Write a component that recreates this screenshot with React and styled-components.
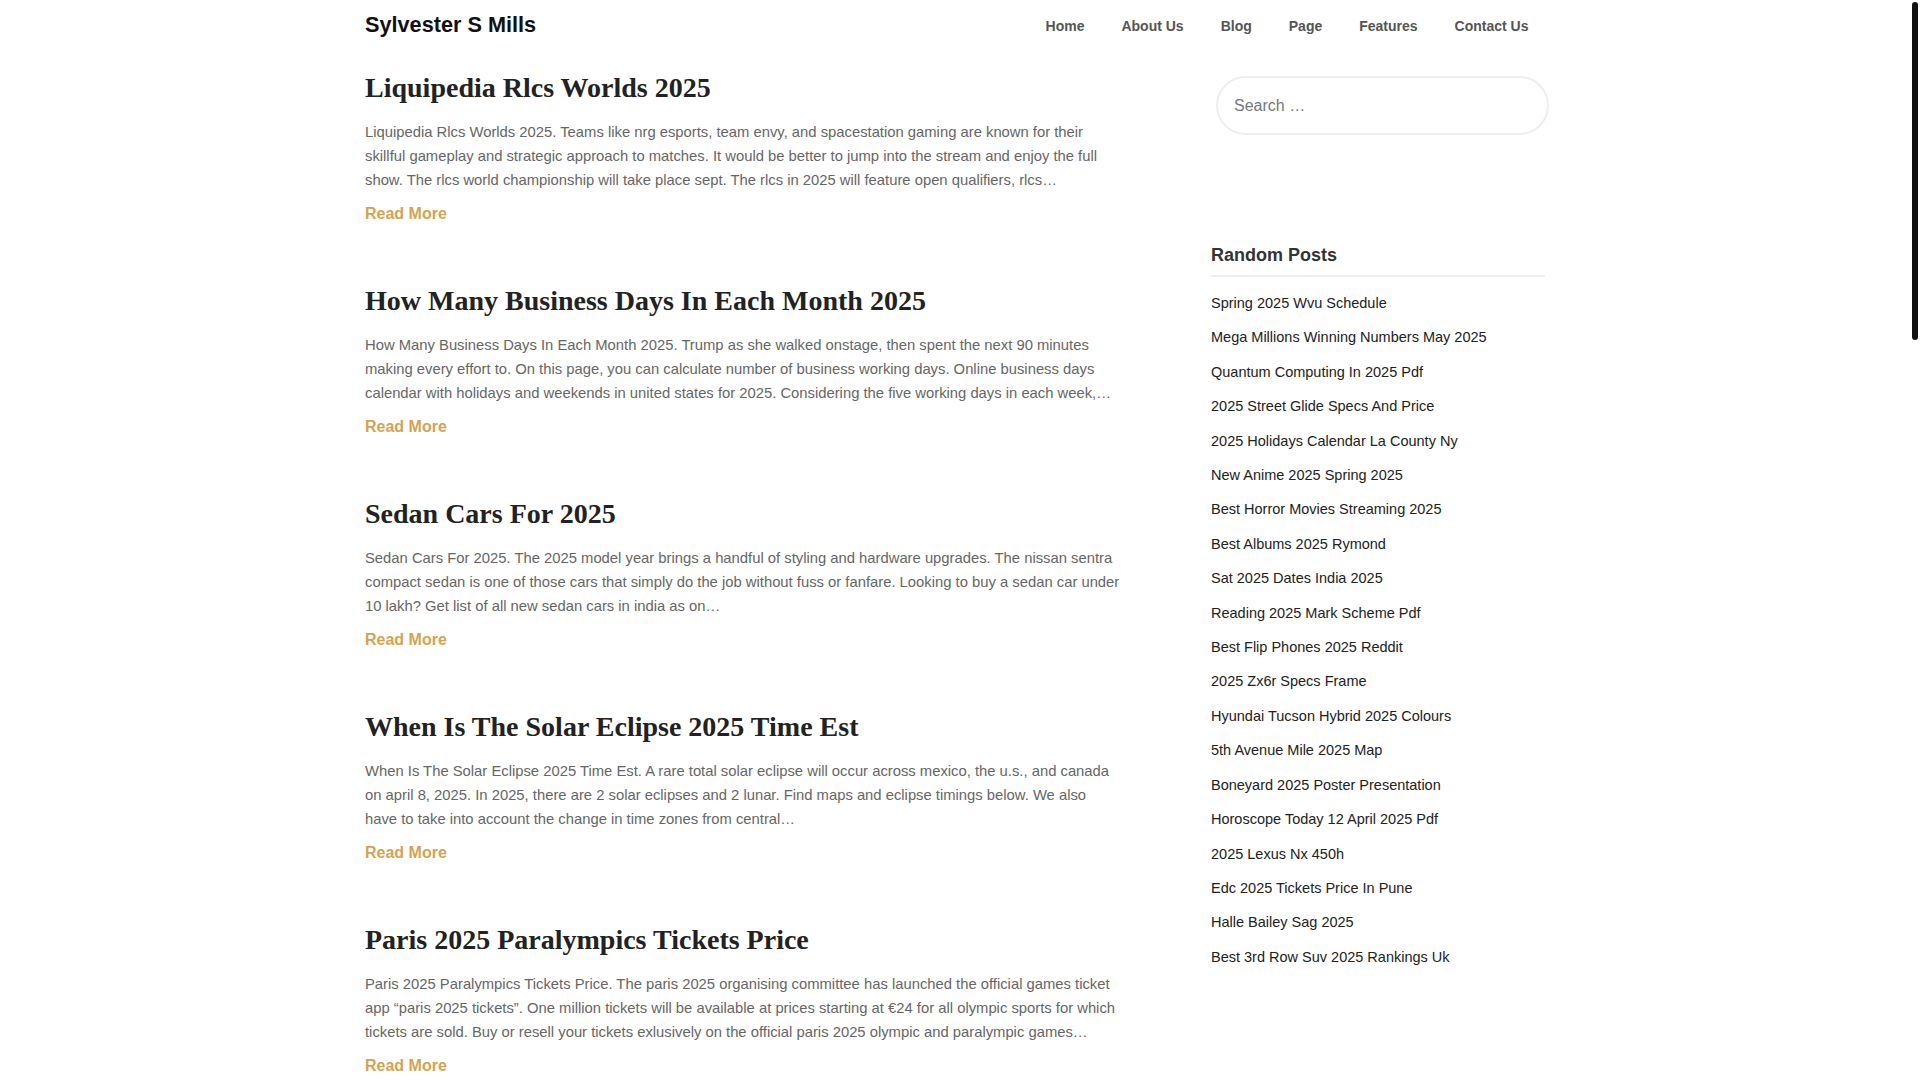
import React from "react";
import styled, { createGlobalStyle } from "styled-components";

const GlobalStyle = createGlobalStyle`
  html { background: #fff; }
  body {
    margin: 0;
    background: #fff;
    font-family: "Liberation Sans", Arial, sans-serif;
    color: #222;
  }
  * { box-sizing: border-box; }
  a { text-decoration: none; }
`;

const Shell = styled.div`
  padding-right: 10px;
  min-height: 3450px;
`;

const ScrollThumb = styled.div`
  position: fixed;
  top: 2px;
  right: 2px;
  width: 6px;
  height: 338px;
  background: #111;
  border-radius: 3px;
  z-index: 10;
`;

const Page = styled.div`
  width: 1180px;
  margin: 0 auto;
`;

const Header = styled.header`
  height: 50px;
  display: flex;
  align-items: center;
  justify-content: space-between;
`;

const SiteTitle = styled.a`
  font-size: 21.7px;
  font-weight: 700;
  color: #111;
  line-height: 26px;
`;

const Nav = styled.nav`
  display: flex;
  align-items: center;
  margin-top: 1px;
  margin-right: -2px;
`;

const NavLink = styled.a`
  font-size: 14px;
  font-weight: 700;
  color: #555;
  padding: 0 18.5px;
  line-height: 20px;
`;

const Layout = styled.div`
  display: grid;
  grid-template-columns: 755px 334px;
  column-gap: 91px;
  padding-top: 21px;
  align-items: start;
`;

const Main = styled.main`
  display: flex;
  flex-direction: column;
`;

const Article = styled.article`
  margin-bottom: 58px;
`;

const PostTitle = styled.h2`
  font-family: "Liberation Serif", "Times New Roman", serif;
  font-size: 28px;
  font-weight: 700;
  line-height: 34px;
  color: #222;
  margin: 0 0 15px;
`;

const Excerpt = styled.p`
  font-size: 14.8px;
  line-height: 24px;
  color: #666;
  margin: 0 0 10px;
`;

const ReadMore = styled.a`
  display: inline-block;
  font-size: 16px;
  font-weight: 700;
  line-height: 24px;
  color: #d4a350;
`;

const Sidebar = styled.aside`
  padding-top: 5px;
`;

const SearchForm = styled.form`
  margin-left: 5px;
  width: 333px;
`;

const SearchInput = styled.input`
  width: 100%;
  height: 59px;
  border: 2px solid #eee;
  border-radius: 30px;
  padding: 0 16px;
  font-family: "Liberation Sans", Arial, sans-serif;
  font-size: 16px;
  color: #333;
  background: #fff;
  outline: none;
  &::placeholder { color: #777; }
`;

const Widget = styled.section`
  margin-top: 109px;
`;

const WidgetTitle = styled.h3`
  font-size: 18px;
  font-weight: 700;
  line-height: 22px;
  color: #333;
  margin: 0;
  padding-bottom: 9px;
  border-bottom: 2px solid #eee;
`;

const PostList = styled.ul`
  list-style: none;
  margin: 9px 0 0;
  padding: 0;
`;

const PostItem = styled.li`
  padding: 7px 0;
  line-height: 20.4px;
  font-size: 14.5px;
`;

const PostLink = styled.a`
  color: #222;
`;

const navItems = ["Home", "About Us", "Blog", "Page", "Features", "Contact Us"];

const posts = [
  {
    title: "Liquipedia Rlcs Worlds 2025",
    excerpt:
      "Liquipedia Rlcs Worlds 2025. Teams like nrg esports, team envy, and spacestation gaming are known for their skillful gameplay and strategic approach to matches. It would be better to jump into the stream and enjoy the full show. The rlcs world championship will take place sept. The rlcs in 2025 will feature open qualifiers, rlcs…",
  },
  {
    title: "How Many Business Days In Each Month 2025",
    excerpt:
      "How Many Business Days In Each Month 2025. Trump as she walked onstage, then spent the next 90 minutes making every effort to. On this page, you can calculate number of business working days. Online business days calendar with holidays and weekends in united states for 2025. Considering the five working days in each week,…",
  },
  {
    title: "Sedan Cars For 2025",
    excerpt:
      "Sedan Cars For 2025. The 2025 model year brings a handful of styling and hardware upgrades. The nissan sentra compact sedan is one of those cars that simply do the job without fuss or fanfare. Looking to buy a sedan car under 10 lakh? Get list of all new sedan cars in india as on…",
  },
  {
    title: "When Is The Solar Eclipse 2025 Time Est",
    excerpt:
      "When Is The Solar Eclipse 2025 Time Est. A rare total solar eclipse will occur across mexico, the u.s., and canada on april 8, 2025. In 2025, there are 2 solar eclipses and 2 lunar. Find maps and eclipse timings below. We also have to take into account the change in time zones from central…",
  },
  {
    title: "Paris 2025 Paralympics Tickets Price",
    excerpt:
      "Paris 2025 Paralympics Tickets Price. The paris 2025 organising committee has launched the official games ticket app \u201Cparis 2025 tickets\u201D. One million tickets will be available at prices starting at \u20AC24 for all olympic sports for which tickets are sold. Buy or resell your tickets exlusively on the official paris 2025 olympic and paralympic games…",
  },
];

const randomPosts = [
  "Spring 2025 Wvu Schedule",
  "Mega Millions Winning Numbers May 2025",
  "Quantum Computing In 2025 Pdf",
  "2025 Street Glide Specs And Price",
  "2025 Holidays Calendar La County Ny",
  "New Anime 2025 Spring 2025",
  "Best Horror Movies Streaming 2025",
  "Best Albums 2025 Rymond",
  "Sat 2025 Dates India 2025",
  "Reading 2025 Mark Scheme Pdf",
  "Best Flip Phones 2025 Reddit",
  "2025 Zx6r Specs Frame",
  "Hyundai Tucson Hybrid 2025 Colours",
  "5th Avenue Mile 2025 Map",
  "Boneyard 2025 Poster Presentation",
  "Horoscope Today 12 April 2025 Pdf",
  "2025 Lexus Nx 450h",
  "Edc 2025 Tickets Price In Pune",
  "Halle Bailey Sag 2025",
  "Best 3rd Row Suv 2025 Rankings Uk",
];

export default function App() {
  return (
    <>
      <GlobalStyle />
      <ScrollThumb />
      <Shell>
        <Page>
          <Header>
            <SiteTitle href="#">Sylvester S Mills</SiteTitle>
            <Nav>
              {navItems.map((n) => (
                <NavLink key={n} href="#">
                  {n}
                </NavLink>
              ))}
            </Nav>
          </Header>
          <Layout>
            <Main>
              {posts.map((p) => (
                <Article key={p.title}>
                  <PostTitle>{p.title}</PostTitle>
                  <Excerpt>{p.excerpt}</Excerpt>
                  <ReadMore href="#">Read More</ReadMore>
                </Article>
              ))}
            </Main>
            <Sidebar>
              <SearchForm onSubmit={(e) => e.preventDefault()}>
                <SearchInput type="search" placeholder="Search …" />
              </SearchForm>
              <Widget>
                <WidgetTitle>Random Posts</WidgetTitle>
                <PostList>
                  {randomPosts.map((t) => (
                    <PostItem key={t}>
                      <PostLink href="#">{t}</PostLink>
                    </PostItem>
                  ))}
                </PostList>
              </Widget>
            </Sidebar>
          </Layout>
        </Page>
      </Shell>
    </>
  );
}
